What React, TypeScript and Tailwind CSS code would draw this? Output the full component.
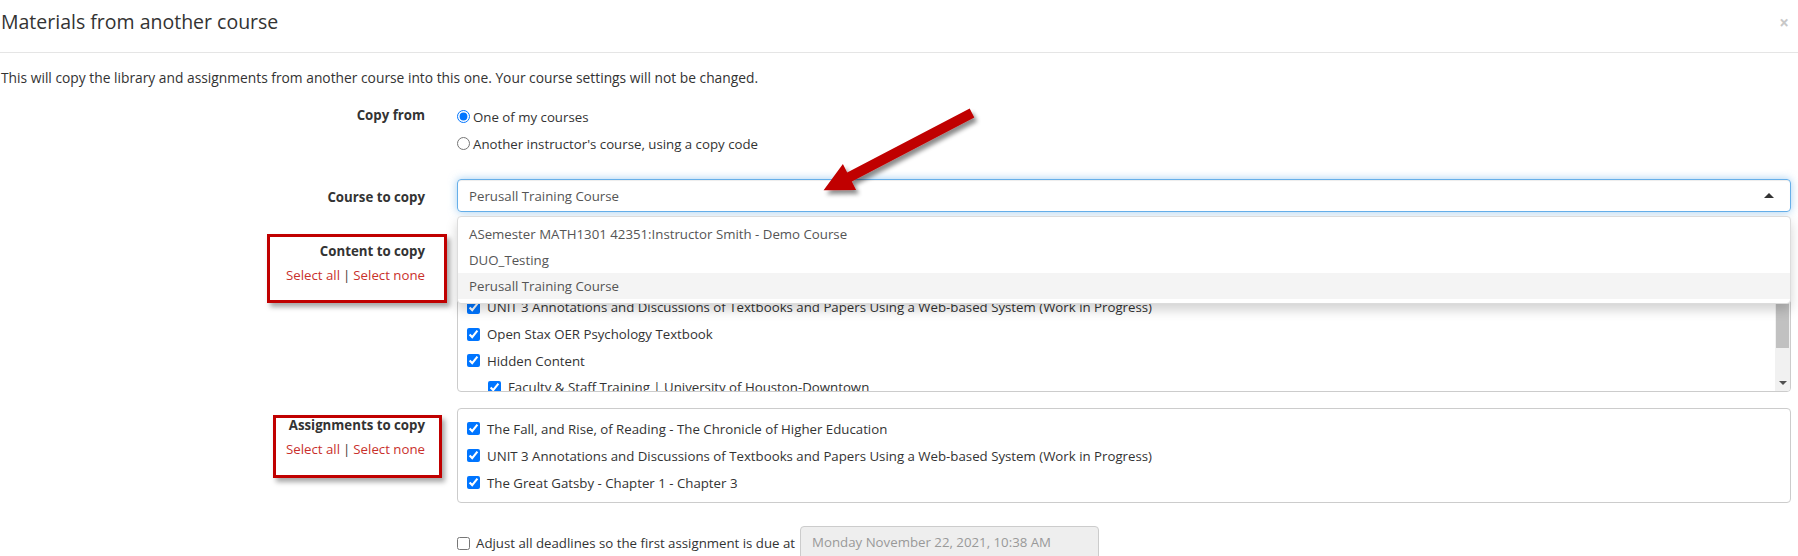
import React from "react";

const contentItems: { text: string; nested?: boolean }[] = [
  { text: "The Fall, and Rise, of Reading - The Chronicle of Higher Education" },
  { text: "The Great Gatsby - Chapter 1 - Chapter 3" },
  { text: "UNIT 3 Annotations and Discussions of Textbooks and Papers Using a Web-based System (Work in Progress)" },
  { text: "Open Stax OER Psychology Textbook" },
  { text: "Hidden Content" },
  { text: "Faculty & Staff Training | University of Houston-Downtown", nested: true },
];

const assignmentItems = [
  "The Fall, and Rise, of Reading - The Chronicle of Higher Education",
  "UNIT 3 Annotations and Discussions of Textbooks and Papers Using a Web-based System (Work in Progress)",
  "The Great Gatsby - Chapter 1 - Chapter 3",
];

function Check({ checked = true }: { checked?: boolean }) {
  return (
    <input
      type="checkbox"
      checked={checked}
      readOnly
      className="m-0 w-[13px] h-[13px] shrink-0"
    />
  );
}

function SelectLinks() {
  return (
    <div className="mt-[4px] leading-[20px] text-[#c9302c]">
      <span>Select all</span>
      <span className="text-[#333] mx-[3px]">|</span>
      <span>Select none</span>
    </div>
  );
}

export default function App() {
  return (
    <div className="relative w-[1798px] h-[556px] overflow-hidden bg-white text-[#333] text-[13.25px] font-['Open_Sans',_'Liberation_Sans',_sans-serif]">
      {/* Header */}
      <div className="h-[53px] border-b border-[#e5e5e5] flex items-start justify-between pt-[12px]">
        <h4 className="pl-[1px] text-[19.5px] leading-[20px] text-[#333]">Materials from another course</h4>
        <span className="mr-[9px] mt-[1px] text-[17px] leading-[20px] font-bold text-[#c8c8c8]">×</span>
      </div>

      {/* Description */}
      <p className="mt-[15px] pl-[1px] leading-[20px] text-[13.8px]">
        This will copy the library and assignments from another course into this one. Your course settings will not be changed.
      </p>

      {/* Form */}
      <div className="grid grid-cols-[425px_1334px] gap-x-[32px] mt-[15px]">
        {/* Copy from */}
        <div className="text-right font-bold pt-[2px] leading-[20px]">Copy from</div>
        <div>
          <label className="h-[27px] flex items-center gap-[3px]">
            <input type="radio" checked readOnly className="m-0 w-[13px] h-[13px]" />
            <span className="leading-[20px]">One of my courses</span>
          </label>
          <label className="h-[27px] flex items-center gap-[3px]">
            <input type="radio" checked={false} readOnly className="m-0 w-[13px] h-[13px]" />
            <span className="leading-[20px]">Another instructor's course, using a copy code</span>
          </label>
        </div>

        {/* Course to copy */}
        <div className="mt-[22px] text-right font-bold pt-[8px] leading-[20px]">Course to copy</div>
        <div className="mt-[22px] relative z-10">
          <div className="h-[33px] rounded-[4px] border border-[#66afe9] shadow-[inset_0_1px_1px_rgba(0,0,0,0.075),0_0_8px_rgba(102,175,233,0.6)] flex items-center justify-between pl-[11px] pr-[16px] text-[#555]">
            <span className="leading-[20px]">Perusall Training Course</span>
            <span className="w-0 h-0 border-x-[5px] border-x-transparent border-b-[5px] border-b-[#333]"></span>
          </div>
          <div className="absolute left-0 right-0 top-[37px] rounded-[4px] border border-[#dcdcdc] bg-white py-[4px] shadow-[0_6px_12px_rgba(0,0,0,0.175)] text-[#555]">
            <div className="h-[26px] flex items-center pl-[11px] leading-[20px]">ASemester MATH1301 42351:Instructor Smith - Demo Course</div>
            <div className="h-[26px] flex items-center pl-[11px] leading-[20px]">DUO_Testing</div>
            <div className="h-[26px] flex items-center pl-[11px] leading-[20px] bg-[#f4f4f4]">Perusall Training Course</div>
          </div>
        </div>

        {/* Content to copy */}
        <div className="mt-[22px] text-right pt-[7px]">
          <div className="font-bold leading-[20px]">Content to copy</div>
          <SelectLinks />
        </div>
        <div className="mt-[22px] h-[158px] rounded-[4px] border border-[#ccc] flex overflow-hidden">
          <div className="flex-1 pt-[6px] overflow-hidden">
            {contentItems.map((it, i) => (
              <div
                key={i}
                className={`h-[26.6px] flex items-center gap-[7px] whitespace-nowrap ${it.nested ? "pl-[30px]" : "pl-[9px]"}`}
              >
                <Check />
                <span className="leading-[20px]">{it.text}</span>
              </div>
            ))}
          </div>
          <div className="w-[15px] bg-[#f1f1f1] flex flex-col">
            <div className="h-[17px] flex items-center justify-center">
              <span className="w-0 h-0 border-x-[4px] border-x-transparent border-b-[4px] border-b-[#505050]"></span>
            </div>
            <div className="h-[96px] mx-[1px] bg-[#c1c1c1]"></div>
            <div className="flex-1"></div>
            <div className="h-[17px] flex items-center justify-center">
              <span className="w-0 h-0 border-x-[4px] border-x-transparent border-t-[4px] border-t-[#505050]"></span>
            </div>
          </div>
        </div>

        {/* Assignments to copy */}
        <div className="mt-[16px] text-right pt-[7px]">
          <div className="font-bold leading-[20px]">Assignments to copy</div>
          <SelectLinks />
        </div>
        <div className="mt-[16px] h-[95px] rounded-[4px] border border-[#ccc] pt-[6px]">
          {assignmentItems.map((t, i) => (
            <div key={i} className="h-[27px] flex items-center gap-[7px] pl-[9px] whitespace-nowrap">
              <Check />
              <span className="leading-[20px]">{t}</span>
            </div>
          ))}
        </div>

        {/* Adjust deadlines */}
        <div className="mt-[23px]"></div>
        <div className="mt-[23px] flex items-center h-[34px]">
          <Check checked={false} />
          <span className="ml-[6px] leading-[20px]">Adjust all deadlines so the first assignment is due at</span>
          <div className="ml-[5px] w-[299px] h-[34px] rounded-[4px] border border-[#ccc] bg-[#eee] flex items-center pl-[11px] text-[#999]">
            Monday November 22, 2021, 10:38 AM
          </div>
        </div>
      </div>

      {/* Annotation boxes */}
      <div className="absolute left-[267px] top-[234px] w-[180px] h-[69px] border-[3px] border-[#c00000] shadow-[3px_4px_5px_rgba(0,0,0,0.35)]"></div>
      <div className="absolute left-[273px] top-[415px] w-[169px] h-[63px] border-[3px] border-[#c00000] shadow-[3px_4px_5px_rgba(0,0,0,0.35)]"></div>

      {/* Annotation arrow */}
      <svg className="absolute left-0 top-0 z-20 pointer-events-none" width="1798" height="556">
        <defs>
          <filter id="sh" x="-20%" y="-20%" width="140%" height="160%">
            <feDropShadow dx="3" dy="4" stdDeviation="2" floodColor="#000" floodOpacity="0.45" />
          </filter>
        </defs>
        <polygon
          filter="url(#sh)"
          fill="#c00000"
          points="969.7,108.5 847.2,172.5 842.9,164.1 823.6,190.2 856.1,189.9 851.8,181.5 974.3,117.5"
        />
      </svg>
    </div>
  );
}
